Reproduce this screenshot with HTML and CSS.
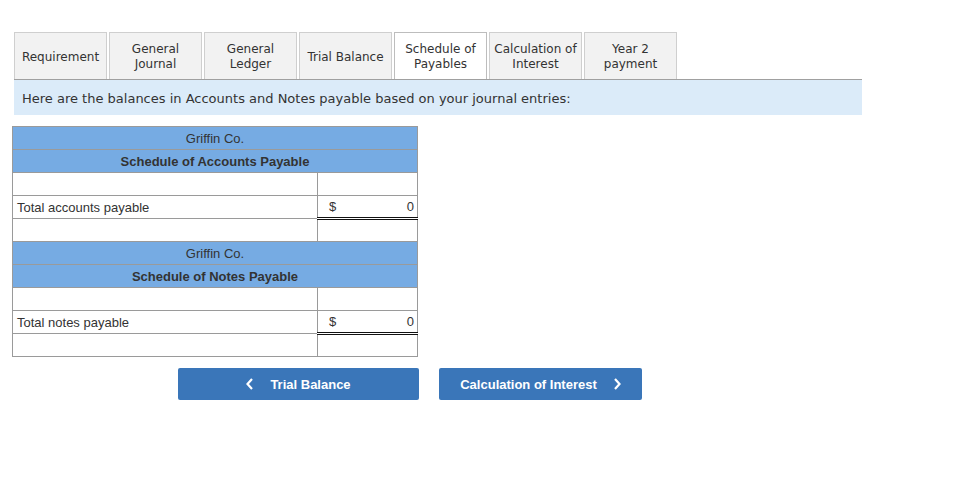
FILE: index.html
```html
<!DOCTYPE html>
<html lang="en">
<head>
  <meta charset="UTF-8" />
  <title>Schedule of Payables</title>
  <link rel="stylesheet" href="styles.css">
</head>
<body>
  <div class="page">
    <div class="tabs">
      <div class="tab">Requirement</div>
      <div class="tab">General<br>Journal</div>
      <div class="tab">General<br>Ledger</div>
      <div class="tab">Trial Balance</div>
      <div class="tab active">Schedule of<br>Payables</div>
      <div class="tab">Calculation of<br>Interest</div>
      <div class="tab">Year 2<br>payment</div>
    </div>

    <div class="info">Here are the balances in Accounts and Notes payable based on your journal entries:</div>

    <table class="schedule">
      <tr class="head"><td colspan="2">Griffin Co.</td></tr>
      <tr class="head title"><td colspan="2">Schedule of Accounts Payable</td></tr>
      <tr><td></td><td class="amt"></td></tr>
      <tr><td>Total accounts payable</td><td class="amt total"><span>$</span><span>0</span></td></tr>
      <tr><td></td><td class="amt"></td></tr>
      <tr class="head"><td colspan="2">Griffin Co.</td></tr>
      <tr class="head title"><td colspan="2">Schedule of Notes Payable</td></tr>
      <tr><td></td><td class="amt"></td></tr>
      <tr><td>Total notes payable</td><td class="amt total"><span>$</span><span>0</span></td></tr>
      <tr><td></td><td class="amt"></td></tr>
    </table>

    <div class="nav">
      <button class="btn prev">
        <svg width="8" height="12" viewBox="0 0 8 12"><polyline points="6,1 1.5,6 6,11" fill="none" stroke="white" stroke-width="2.2"/></svg>
        Trial Balance
      </button>
      <button class="btn next">
        Calculation of Interest
        <svg width="8" height="12" viewBox="0 0 8 12"><polyline points="2,1 6.5,6 2,11" fill="none" stroke="white" stroke-width="2.2"/></svg>
      </button>
    </div>
  </div>
</body>
</html>
```

FILE: styles.css
```css
body {
  margin: 0;
  font-family: "DejaVu Sans", Verdana, sans-serif;
  color: #333;
  background: white;
}

.page {
  padding: 32px 0 0 12px;
}

.tabs {
  display: flex;
  gap: 2px;
  margin-left: 2px;
  width: 848px;
  border-bottom: 1px solid #a0a0a0;
}

.tab {
  width: 93px;
  height: 47px;
  padding-top: 2px;
  box-sizing: border-box;
  border: 1px solid #cfcfcf;
  border-bottom: none;
  background: #f2f2f2;
  font-size: 12px;
  line-height: 15px;
  display: flex;
  align-items: center;
  justify-content: center;
  text-align: center;
  color: #333;
}

.tab.active {
  background: white;
  border-color: #bdbdbd;
}

.info {
  margin-left: 2px;
  width: 840px;
  height: 35px;
  padding-left: 8px;
  background: #dbebf9;
  font-size: 13px;
  line-height: 37px;
  color: #333;
}

.schedule {
  margin-top: 11px;
  border-collapse: collapse;
  width: 406px;
  font-family: "Liberation Sans", Arial, sans-serif;
  font-size: 13px;
  line-height: 15px;
  color: #333;
}

.schedule tr {
  height: 23px;
}

.schedule td {
  border: 1px solid #9a9a9a;
  padding: 0 4px;
}

.schedule td.amt {
  width: 91px;
}

.schedule td.total {
  border-top: 1px solid #111;
  border-bottom: 3px double #111;
}

.schedule td.total span {
  display: inline-block;
}

.schedule td.total span:first-child {
  margin-left: 7px;
}

.schedule td.total span:last-child {
  float: right;
  margin-right: -1px;
}

.schedule tr.head td {
  background: #76abe3;
  text-align: center;
  color: #333;
}

.schedule tr.head.title td {
  font-weight: bold;
}

.nav {
  display: flex;
  gap: 20px;
  margin: 11px 0 0 166px;
}

.btn {
  height: 32px;
  border: none;
  border-radius: 2px;
  background: #3a76b9;
  color: white;
  font-family: "Liberation Sans", Arial, sans-serif;
  font-size: 13px;
  font-weight: bold;
  display: flex;
  align-items: center;
  justify-content: center;
  gap: 16px;
  padding: 0;
}

.btn.prev {
  width: 241px;
}

.btn.next {
  width: 203px;
}
```
